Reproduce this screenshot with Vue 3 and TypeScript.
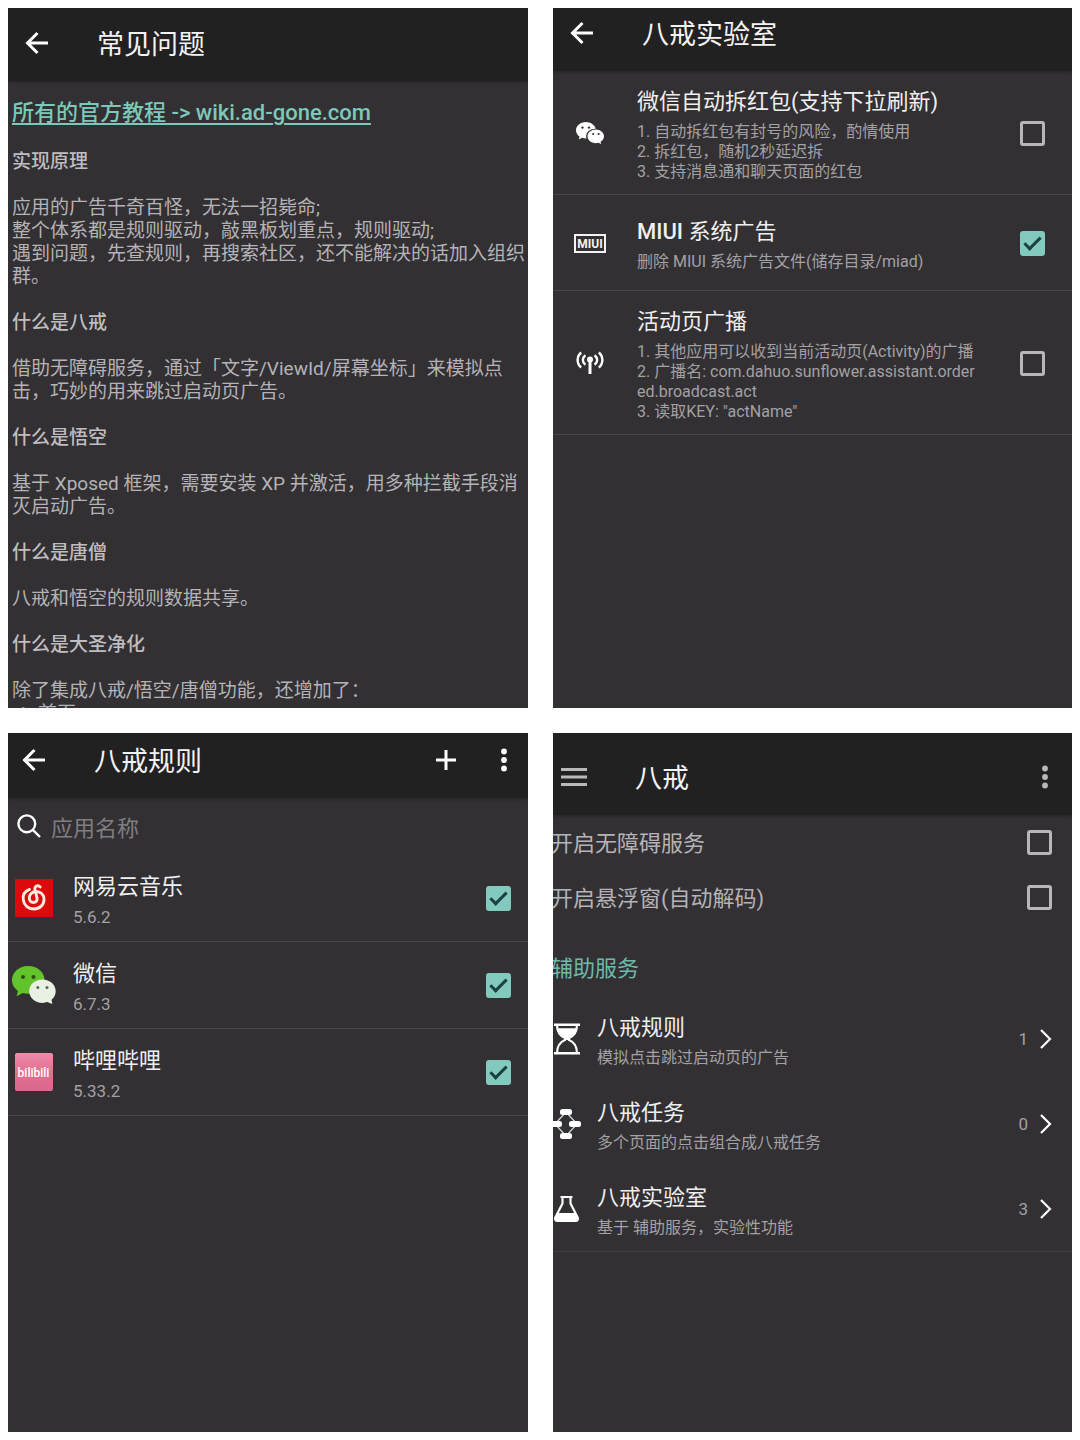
<script setup lang="ts">
import { reactive, ref } from 'vue'

interface FaqSection {
  heading: string
  lines: string[]
}

interface LabItem {
  id: string
  icon: 'wechat' | 'miui' | 'broadcast'
  brand?: string
  title: string
  lines: string[]
  checked: boolean
}

interface RuleApp {
  id: string
  icon: 'netease' | 'wechat' | 'bilibili'
  name: string
  version: string
  checked: boolean
}

interface ServiceEntry {
  id: string
  icon: 'hourglass' | 'task' | 'flask'
  title: string
  note: string
  count: number
}

const faq: FaqSection[] = [
  {
    heading: '实现原理',
    lines: [
      '应用的广告千奇百怪，无法一招毙命;',
      '整个体系都是规则驱动，敲黑板划重点，规则驱动;',
      '遇到问题，先查规则，再搜索社区，还不能解决的话加入组织群。',
    ],
  },
  {
    heading: '什么是八戒',
    lines: ['借助无障碍服务，通过「文字/ViewId/屏幕坐标」来模拟点击，巧妙的用来跳过启动页广告。'],
  },
  {
    heading: '什么是悟空',
    lines: ['基于 Xposed 框架，需要安装 XP 并激活，用多种拦截手段消灭启动广告。'],
  },
  { heading: '什么是唐僧', lines: ['八戒和悟空的规则数据共享。'] },
  { heading: '什么是大圣净化', lines: ['除了集成八戒/悟空/唐僧功能，还增加了：'] },
]

const labItems = reactive<LabItem[]>([
  {
    id: 'red-packet',
    icon: 'wechat',
    title: '微信自动拆红包(支持下拉刷新)',
    lines: ['1. 自动拆红包有封号的风险，酌情使用', '2. 拆红包，随机2秒延迟拆', '3. 支持消息通和聊天页面的红包'],
    checked: false,
  },
  {
    id: 'miui-ads',
    icon: 'miui',
    brand: 'MIUI',
    title: ' 系统广告',
    lines: ['删除 MIUI 系统广告文件(储存目录/miad)'],
    checked: true,
  },
  {
    id: 'activity-broadcast',
    icon: 'broadcast',
    title: '活动页广播',
    lines: [
      '1. 其他应用可以收到当前活动页(Activity)的广播',
      '2. 广播名: com.dahuo.sunflower.assistant.ordered.broadcast.act',
      '3. 读取KEY: "actName"',
    ],
    checked: false,
  },
])

const ruleApps = reactive<RuleApp[]>([
  { id: 'netease-music', icon: 'netease', name: '网易云音乐', version: '5.6.2', checked: true },
  { id: 'wechat', icon: 'wechat', name: '微信', version: '6.7.3', checked: true },
  { id: 'bilibili', icon: 'bilibili', name: '哔哩哔哩', version: '5.33.2', checked: true },
])

const switches = reactive([
  { id: 'accessibility', label: '开启无障碍服务', checked: false },
  { id: 'floating', label: '开启悬浮窗(自动解码)', checked: false },
])

const services: ServiceEntry[] = [
  { id: 'rules', icon: 'hourglass', title: '八戒规则', note: '模拟点击跳过启动页的广告', count: 1 },
  { id: 'tasks', icon: 'task', title: '八戒任务', note: '多个页面的点击组合成八戒任务', count: 0 },
  { id: 'lab', icon: 'flask', title: '八戒实验室', note: '基于 辅助服务，实验性功能', count: 3 },
]

const query = ref('')
</script>

<template>
  <main class="board" lang="zh-CN">
    <section class="screen">
      <header class="bar bar-faq">
        <button class="icon-btn" type="button" aria-label="返回">
          <svg width="24" height="24" viewBox="0 0 24 24"><path class="line" d="M23 12H3M12.5 2L2.5 12l10 10" /></svg>
        </button>
        <h1>常见问题</h1>
      </header>
      <div class="faq">
        <a class="wiki" href="#wiki">所有的官方教程 -&gt; wiki.ad-gone.com</a>
        <template v-for="section in faq" :key="section.heading">
          <h2>{{ section.heading }}</h2>
          <p v-for="line in section.lines" :key="line">{{ line }}</p>
        </template>
        <ol>
          <li>首页</li>
        </ol>
      </div>
    </section>

    <section class="screen">
      <header class="bar bar-lab">
        <button class="icon-btn" type="button" aria-label="返回">
          <svg width="24" height="24" viewBox="0 0 24 24"><path class="line" d="M23 12H3M12.5 2L2.5 12l10 10" /></svg>
        </button>
        <h1>八戒实验室</h1>
      </header>
      <ul class="list">
        <li v-for="item in labItems" :key="item.id" class="lab-row">
          <span class="lab-icon">
            <svg v-if="item.icon === 'wechat'" width="28" height="22" viewBox="0 0 28 22">
              <path fill="#fff" d="M9.800 0C4.400 0 0 3.700 0 8.300c0 2.600 1.400 4.900 3.600 6.400L2.700 17.400l3.300-1.600c1.200.4 2.400.6 3.800.6h.6a7 7 0 0 1-.3-2c0-4.300 4.100-7.700 9.100-7.700h.5C18.800 2.900 14.700 0 9.800 0z" />
              <path fill="#fff" d="M28 14.300c0-3.800-3.700-6.900-8.200-6.900s-8.300 3.100-8.300 6.900 3.700 6.900 8.300 6.900c1 0 1.900-.1 2.800-.4l2.600 1.400-.7-2.400c2.100-1.300 3.500-3.200 3.500-5.500z" />
              <g fill="#323033"><circle cx="6.500" cy="5.600" r="1.200" /><circle cx="13" cy="5.600" r="1.200" /><circle cx="17.200" cy="12" r="1.100" /><circle cx="22.600" cy="12" r="1.100" /></g>
            </svg>
            <span v-else-if="item.icon === 'miui'" class="miui">MIUI</span>
            <svg v-else width="28" height="24" viewBox="0 0 28 24">
              <g fill="none" stroke="#fff" stroke-width="2.400">
                <path d="M5.200 1.500C.4 5.500.4 12.500 5.200 16.500M22.800 1.500c4.800 4 4.800 11 0 15" />
                <path d="M9.400 4.200c-3.400 2.600-3.400 7 0 9.600M18.600 4.200c3.400 2.600 3.400 7 0 9.600" />
                <path stroke-width="3" d="M14 9v14" />
              </g>
              <circle cx="14" cy="8.500" r="3" fill="#fff" />
            </svg>
          </span>
          <label class="copy" :for="item.id">
            <span class="title"><strong v-if="item.brand">{{ item.brand }}</strong>{{ item.title }}</span>
            <span v-for="line in item.lines" :key="line" class="note">{{ line }}</span>
          </label>
          <input :id="item.id" v-model="item.checked" class="tick" type="checkbox" />
        </li>
      </ul>
    </section>

    <section class="screen">
      <header class="bar bar-rules">
        <button class="icon-btn" type="button" aria-label="返回">
          <svg width="24" height="24" viewBox="0 0 24 24"><path class="line" d="M23 12H3M12.5 2L2.5 12l10 10" /></svg>
        </button>
        <h1>八戒规则</h1>
        <button class="icon-btn push" type="button" aria-label="添加">
          <svg width="20" height="20" viewBox="0 0 20 20"><path class="line" d="M0 10h20M10 0v20" /></svg>
        </button>
        <button class="icon-btn more" type="button" aria-label="更多">
          <svg width="6" height="24" viewBox="0 0 6 24" fill="#fff"><circle cx="3" cy="3.500" r="2.900" /><circle cx="3" cy="12" r="2.900" /><circle cx="3" cy="20.500" r="2.900" /></svg>
        </button>
      </header>
      <div class="search">
        <label for="app-search" aria-label="搜索">
          <svg width="24" height="24" viewBox="0 0 24 24" fill="none" stroke="#fff" stroke-width="2.400"><circle cx="9.800" cy="9.800" r="8.400" /><path d="M15.800 15.800L23 23" /></svg>
        </label>
        <input id="app-search" v-model="query" type="text" placeholder="应用名称" />
      </div>
      <ul class="list">
        <li v-for="app in ruleApps" :key="app.id" class="app-row">
          <span class="app-icon">
            <svg v-if="app.icon === 'netease'" width="38" height="38" viewBox="0 0 38 38">
              <rect width="38" height="38" fill="#dc0a0c" />
              <path fill="none" stroke="#ffe9df" stroke-width="2.900" stroke-linecap="round" d="M14.500 10.400C9.500 12.300 7.600 16.500 8.300 21c.8 5.500 5.200 9 10.400 9C25 30 29 25.500 29 20.500c0-5-3.500-8-8-8-4 0-6.700 3-6.700 6.500 0 2.500 1.700 4.500 4.200 4.500s4.100-2 3.500-4.500l-2-8c-.7-3 1-4.200 2.500-4.200 1.200 0 2.200.5 2.700 1.200" />
            </svg>
            <svg v-else-if="app.icon === 'wechat'" width="44" height="38" viewBox="0 0 44 38">
              <path fill="#63c32c" d="M16.200 0C7.200 0 0 6.300 0 14c0 4.500 2.300 8.400 6 10.900l-1.400 5.300 6.200-3.200c1.700.5 3.500.8 5.400.8 9 0 16.300-6.200 16.300-13.900S25.200 0 16.200 0z" />
              <path fill="#e9f1e4" d="M43.700 25.200c0-6.600-5.900-11.700-13.200-11.700s-13.300 5.100-13.300 11.700 6 11.700 13.300 11.700c1.700 0 3.300-.3 4.800-.8l4.900 1.900-.6-4.200c2.500-2.100 4.100-5.200 4.100-8.600z" />
              <g fill="#27520f"><circle cx="11" cy="11" r="2" /><circle cx="21.500" cy="11" r="2" /></g>
              <g fill="#5d665a"><circle cx="25.800" cy="21.500" r="1.500" /><circle cx="35" cy="21.500" r="1.500" /></g>
            </svg>
            <span v-else class="bili">bilibili</span>
          </span>
          <label class="copy" :for="'app-' + app.id">
            <span class="title">{{ app.name }}</span>
            <span class="note version">{{ app.version }}</span>
          </label>
          <input :id="'app-' + app.id" v-model="app.checked" class="tick" type="checkbox" />
        </li>
      </ul>
    </section>

    <section class="screen">
      <header class="bar bar-home">
        <button class="icon-btn" type="button" aria-label="菜单">
          <svg width="26" height="20" viewBox="0 0 26 20"><path stroke="#bab8bb" stroke-width="3" d="M0 2.500h26M0 10h26M0 17.500h26" /></svg>
        </button>
        <h1>八戒</h1>
        <button class="icon-btn push" type="button" aria-label="更多">
          <svg width="6" height="24" viewBox="0 0 6 24" fill="#bab8bb"><circle cx="3" cy="3.500" r="2.900" /><circle cx="3" cy="12" r="2.900" /><circle cx="3" cy="20.500" r="2.900" /></svg>
        </button>
      </header>
      <div class="bleed">
        <div v-for="item in switches" :key="item.id" class="switch-row">
          <label :for="item.id">{{ item.label }}</label>
          <input :id="item.id" v-model="item.checked" class="tick" type="checkbox" />
        </div>
        <h2 class="group">辅助服务</h2>
        <ul class="list services">
          <li v-for="entry in services" :key="entry.id">
            <a class="service-row" :href="'#' + entry.id">
              <span class="service-icon">
                <svg v-if="entry.icon === 'hourglass'" width="32" height="32" viewBox="0 0 32 32">
                  <path stroke="#fff" stroke-width="2.400" d="M3 1.700h26M3 30.300h26" />
                  <path fill="none" stroke="#fff" stroke-width="2.200" d="M6 1.700c0 7 3.200 11.300 8 13.300v2c-5 2-8 6.300-8 13.300M26 1.700c0 7-3.200 11.300-8 13.300v2c5 2 8 6.300 8 13.300" />
                  <path fill="#fff" d="M6.400 5.200h19.200c-1 5-4 8.500-7.600 10.200v1.600h-4v-1.600C10.400 13.700 7.400 10.200 6.400 5.200z" />
                </svg>
                <svg v-else-if="entry.icon === 'task'" width="32" height="30" viewBox="0 0 32 30">
                  <path fill="none" stroke="#d5d4d6" stroke-width="1.300" d="M15 3L4 15l11 12 11-12z" />
                  <g fill="#fff"><rect x="9" y="0" width="12" height="6" rx="2.500" /><rect x="-1" y="12" width="12" height="6" rx="2.500" /><rect x="18" y="12" width="12" height="6" rx="2.500" /><rect x="9" y="24" width="12" height="6" rx="2.500" /></g>
                </svg>
                <svg v-else width="32" height="26" viewBox="0 0 32 26">
                  <path stroke="#fff" stroke-width="2" d="M9.500 1h12" />
                  <path fill="none" stroke="#fff" stroke-width="2.200" stroke-linejoin="round" d="M11.500 1v6.500L4.300 21.500c-.7 1.800.2 3.300 2 3.300h18.400c1.800 0 2.700-1.500 2-3.300L19.500 7.500V1" />
                  <path fill="#fff" d="M7.300 17h16.400l3 5.500c0 1.500-.7 2.300-2 2.300H6.300c-1.300 0-2-.8-2-2.300z" />
                </svg>
              </span>
              <span class="copy">
                <span class="title">{{ entry.title }}</span>
                <span class="note">{{ entry.note }}</span>
              </span>
              <span class="count">{{ entry.count }}</span>
              <svg width="12" height="20" viewBox="0 0 12 20"><path fill="none" stroke="#fff" stroke-width="2.200" d="M1 1l9 9-9 9" /></svg>
            </a>
          </li>
        </ul>
      </div>
    </section>
  </main>
</template>

<style>
body {
  margin: 0;
  background: #fefefe;
}
</style>

<style scoped>
.board {
  display: grid;
  grid-template-columns: minmax(0, 520fr) minmax(0, 519fr);
  grid-template-rows: minmax(0, 700fr) minmax(0, 699fr);
  gap: 25px;
  box-sizing: border-box;
  height: 100vh;
  padding: 8px;
  font-family: Roboto, "Noto Sans CJK SC", sans-serif;
  color: #b5b3b6;
}

.screen {
  display: flex;
  flex-direction: column;
  overflow: hidden;
  background: #323033;
}

h1,
h2,
p,
ul,
ol {
  margin: 0;
  padding: 0;
  font-weight: 400;
}

.bar {
  display: flex;
  flex: none;
  align-items: center;
  box-sizing: border-box;
  background: #222122;
  box-shadow: 0 1px 3px rgba(0, 0, 0, 0.3);
}

.bar h1 {
  margin-left: 48px;
  padding-top: 4px;
  font-size: 27px;
  line-height: 36px;
  color: #f4f3f4;
}

.bar-faq {
  height: 73px;
  padding: 0 0 3px 17px;
}

.bar-lab {
  height: 63px;
  padding: 0 0 14px 17px;
}

.bar-rules {
  height: 65px;
  padding: 0 21px 11px 14px;
}

.bar-home {
  height: 82px;
  padding: 6px 24px 0 8px;
}

.icon-btn {
  display: flex;
  padding: 0;
  border: 0;
  background: none;
}

.push {
  margin-left: auto;
}

.more {
  margin-left: 45px;
}

.line {
  fill: none;
  stroke: #fff;
  stroke-width: 3;
}

.faq {
  flex: 1;
  min-height: 0;
  overflow: hidden;
  padding: 18px 2px 0 4px;
  font-size: 19px;
  line-height: 23px;
}

.wiki {
  display: block;
  font-size: 22px;
  font-weight: 500;
  line-height: 28px;
  color: #7cc8ba;
  text-decoration: underline;
  text-underline-offset: 3px;
}

.faq h2 {
  margin: 23px 0;
  font-size: 19px;
  font-weight: 500;
  line-height: 23px;
  color: #bfbdc0;
}

.faq ol {
  padding-left: 26px;
}

.list {
  list-style: none;
}

.copy {
  display: flex;
  flex: 1;
  flex-direction: column;
  padding-top: 3px;
}

.title {
  margin-bottom: 5px;
  font-size: 22px;
  line-height: 30px;
  color: #f0eff0;
}

.title strong {
  font-weight: 500;
}

.note {
  font-size: 16px;
  line-height: 20px;
  color: #a3a1a4;
  word-break: break-all;
}

.version {
  font-size: 17px;
}

.tick {
  position: relative;
  flex: none;
  box-sizing: border-box;
  width: 25px;
  height: 25px;
  margin: 0;
  appearance: none;
  border: 3px solid #b8b6b9;
  border-radius: 3px;
}

.tick:checked {
  border-color: #82cabd;
  background: #82cabd;
}

.tick:checked::after {
  position: absolute;
  top: -1px;
  left: 5px;
  width: 6px;
  height: 14px;
  border: solid #1d423d;
  border-width: 0 3px 3px 0;
  content: "";
  transform: rotate(45deg);
}

.lab-row {
  display: flex;
  align-items: center;
  box-sizing: border-box;
  min-height: 96px;
  padding: 13px 27px 12px 0;
  border-bottom: 1px solid #48464a;
}

.lab-icon {
  display: flex;
  flex: none;
  justify-content: center;
  width: 74px;
  margin-right: 10px;
}

.lab-row .copy {
  margin-right: 41px;
}

.miui {
  box-sizing: border-box;
  width: 32px;
  height: 19px;
  border: 2px solid #f4f3f4;
  font-size: 12px;
  font-weight: 700;
  line-height: 16px;
  text-align: center;
  color: #f4f3f4;
}

.search {
  display: flex;
  align-items: center;
  height: 57px;
  padding-left: 9px;
}

.search label {
  display: flex;
  margin-bottom: 2px;
}

.search input {
  flex: 1;
  min-width: 0;
  margin-left: 10px;
  padding: 5px 0 0;
  border: 0;
  outline: 0;
  background: none;
  font-family: inherit;
  font-size: 22px;
  line-height: 30px;
  color: #f0eff0;
}

.search input::placeholder {
  color: #807e81;
  opacity: 1;
}

.app-row {
  display: flex;
  align-items: center;
  box-sizing: border-box;
  height: 87px;
  padding-right: 17px;
  border-bottom: 1px solid #48464a;
}

.app-icon {
  display: flex;
  flex: none;
  justify-content: center;
  width: 51px;
  margin-right: 14px;
}

.bili {
  width: 38px;
  height: 38px;
  border-radius: 2px;
  background: linear-gradient(#ef8bac, #e2708f 50%, #d9688e);
  font-size: 12px;
  font-weight: 500;
  line-height: 40px;
  text-align: center;
  color: #fff;
}

.bleed {
  margin-left: -2px;
}

.switch-row {
  display: flex;
  align-items: center;
  justify-content: space-between;
  height: 55px;
  padding-right: 20px;
  font-size: 22px;
  line-height: 30px;
}

.switch-row label {
  padding-top: 2px;
}

.group {
  padding: 29px 0 12px;
  font-size: 22px;
  line-height: 30px;
  color: #6fb9aa;
}

.services {
  border-bottom: 1px solid #424043;
}

.service-row {
  display: flex;
  align-items: center;
  height: 85px;
  padding-right: 20px;
  color: inherit;
  text-decoration: none;
}

.service-icon {
  display: flex;
  flex: none;
  width: 46px;
}

.count {
  margin-right: 12px;
  font-size: 17px;
  line-height: 20px;
  color: #a3a1a4;
}
</style>
